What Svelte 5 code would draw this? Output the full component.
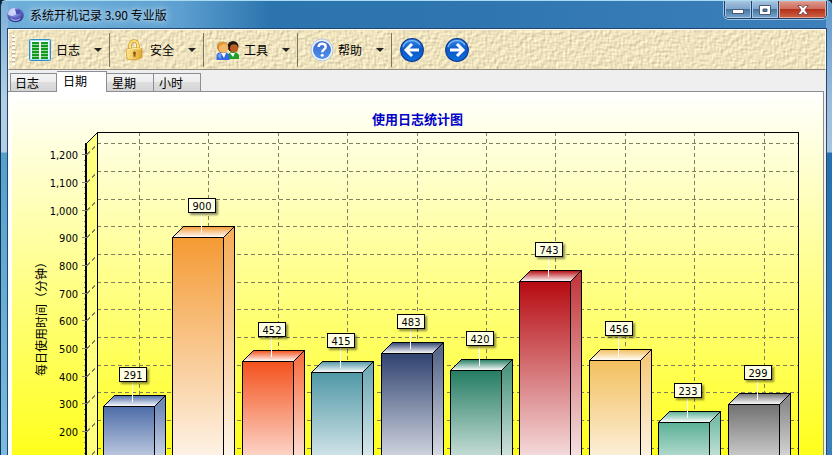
<script lang="ts">
	type IconType = 'log' | 'lock' | 'users' | 'help';

	interface Bar {
		value: number;
		color: string;
	}

	const menus: { label: string; icon: IconType }[] = [
		{ label: '日志', icon: 'log' },
		{ label: '安全', icon: 'lock' },
		{ label: '工具', icon: 'users' },
		{ label: '帮助', icon: 'help' }
	];

	const tabs = ['日志', '日期', '星期', '小时'];
	let selectedTab = $state('日期');

	const bars: Bar[] = [
		{ value: 291, color: '#4c6ca8' },
		{ value: 900, color: '#f49a33' },
		{ value: 452, color: '#f4511c' },
		{ value: 415, color: '#4f97a6' },
		{ value: 483, color: '#2f426f' },
		{ value: 420, color: '#237c62' },
		{ value: 743, color: '#b50a10' },
		{ value: 456, color: '#f3bf5e' },
		{ value: 233, color: '#5ab096' },
		{ value: 299, color: '#707070' }
	];

	// chart geometry
	const height = 363;
	const base = 395;
	const unit = 0.277;
	const depth = 11;
	const barWidth = 51;
	const wallLeft = 85;
	const wallTop = 40;

	let width = $state(810);
	let wallRight = $derived(width - 25);
	let pitch = $derived((width - 117) / bars.length);

	const toY = (value: number) => Math.floor(base - value * unit);
	const ticks = Array.from({ length: 12 }, (_, i) => 1200 - i * 100);
	const labelTicks = ticks.filter((tick) => toY(tick) + 8 < height);
	const minorTicks = Array.from({ length: 62 }, (_, i) => i * 20).filter((v) => v % 100 !== 0);

	let columns = $derived(
		bars.map((bar, i) => ({ ...bar, x: Math.round(91 + pitch * i), y: toY(bar.value) }))
	);
</script>

{#snippet icon(type: IconType)}
	<svg class="icon" viewBox="0 0 24 24" aria-hidden="true">
		{#if type === 'log'}
			<rect x="1.5" y="1.5" width="21" height="21" rx="1" fill="#fff" stroke="#2b93c9" />
			<rect x="2.5" y="2.5" width="19" height="19" fill="none" stroke="#a8dcf2" />
			<path d="M4 4h7v17H4zM13 4h7v17h-7z" fill="#9bd8a0" />
			{#each [4, 7, 10, 13, 16, 19] as y}
				<path d="M4 {y}h7v2h-7zM13 {y}h7v2h-7z" fill="#119a20" />
			{/each}
		{:else if type === 'lock'}
			<path d="M8 11V7.5a4 4.5 0 0 1 8 0V11" fill="none" stroke="#c99a35" stroke-width="3.5" />
			<path d="M8 11V7.5a4 4.5 0 0 1 8 0V11" fill="none" stroke="#ffe27a" stroke-width="2" />
			<path
				d="M4 11.5q8-3 16-1v9q-7 4-15 1.5z"
				fill="url(#gold)"
				stroke="#d19a28"
				stroke-width=".8"
			/>
			<path d="M5 12q7-2.5 14-1" fill="none" stroke="#fff0b0" />
			<path
				d="M12.5 13.5a1.6 1.6 0 0 1 1 2.8v2.5h-2v-2.5a1.6 1.6 0 0 1 1-2.8z"
				fill="#8c5c12"
			/>
		{:else if type === 'users'}
			<path d="M12 21v-4q1-3 5-3t6 3v4z" fill="#1da12b" />
			<path d="M14 15l3 4 2-4z" fill="#fff" />
			<circle cx="17" cy="8.5" r="5.5" fill="#201812" />
			<circle cx="18" cy="10.3" r="4" fill="#bd5c21" />
			<path d="M.5 22v-5q1-3 6-3t7 3v5z" fill="#3469df" />
			<path d="M1.5 18q1-3 4-3l-1 6z" fill="#72a0ff" />
			<path d="M5 15l3 5 2-5z" fill="#fff" />
			<circle cx="6.5" cy="9" r="5.5" fill="#c87724" />
			<circle cx="7.5" cy="10" r="4.8" fill="#f4b967" />
			<path d="M2 8q1-5 6-4 3 1 3 3-3-2-5 0t-4 1z" fill="#e29a3c" />
		{:else}
			<circle cx="12" cy="12" r="11" fill="#edf3fb" stroke="#b9c6de" />
			<circle cx="12" cy="12" r="9" fill="url(#help)" />
			<path
				d="M8.5 9q.3-3.2 3.7-3.2 3.5 0 3.5 3 0 1.7-2 2.9-1.4.9-1.4 2.5"
				fill="none"
				stroke="#fff"
				stroke-width="2.4"
			/>
			<circle cx="12.2" cy="17.2" r="1.5" fill="#fff" />
		{/if}
	</svg>
{/snippet}

{#snippet arrow(d: string)}
	<svg class="icon" viewBox="0 0 24 24" aria-hidden="true">
		<circle cx="12" cy="12" r="11.3" fill="url(#blue)" stroke="#0c3d98" stroke-width="1.2" />
		<path d="M3 9a9.5 9.5 0 0 1 17-2" fill="none" stroke="#7cbcf5" stroke-width="1.3" />
		<path {d} fill="none" stroke="#fff" stroke-width="3" />
	</svg>
{/snippet}

<div class="window">
	<svg class="defs" width="0" height="0" aria-hidden="true">
		<defs>
			<linearGradient id="gold" x1="0" x2="1">
				<stop offset="0" stop-color="#ffe890" />
				<stop offset="1" stop-color="#e0a62c" />
			</linearGradient>
			<linearGradient id="blue" x1="0" y1="0" x2="0" y2="1">
				<stop offset="0" stop-color="#3688e6" />
				<stop offset="0.5" stop-color="#0a56c8" />
				<stop offset="1" stop-color="#1070dc" />
			</linearGradient>
			<linearGradient id="help" x1="0" y1="0" x2="0" y2="1">
				<stop offset="0" stop-color="#3c66cc" />
				<stop offset="1" stop-color="#4c92ec" />
			</linearGradient>
			<radialGradient id="orb" cx="0.4" cy="0.25" r="0.8">
				<stop offset="0" stop-color="#d8dcff" />
				<stop offset="0.5" stop-color="#6a70cc" />
				<stop offset="1" stop-color="#27277c" />
			</radialGradient>
		</defs>
	</svg>

	<header class="titlebar">
		<svg class="app-icon" viewBox="0 0 16 16" aria-hidden="true">
			<ellipse cx="8" cy="8.5" rx="7.8" ry="6.8" fill="url(#orb)" />
			<path d="M.8 8q.5-6 6.500-6.200L9 6q-1 3-5 3.500z" fill="#d3d8fc" opacity=".85" />
			<path d="M7.500 3l4.500.5 1 3.500-4 1z" fill="#4b50b4" />
			<path d="M3 11q5 4 10 0-1 3-5 3t-5-3z" fill="#9ba5f2" />
		</svg>
		<h1>系统开机记录 3.90 专业版</h1>
		<div class="controls">
			<button aria-label="最小化">
				<svg viewBox="0 0 12 12">
					<rect x=".5" y="5.5" width="11" height="4" fill="#fff" stroke="#4a5a74" />
				</svg>
			</button>
			<button aria-label="最大化">
				<svg viewBox="0 0 12 12">
					<path
						d="M.5 1.5h11v9h-11zM4 5v2.5h4V5z"
						fill="#fff"
						fill-rule="evenodd"
						stroke="#4a5a74"
					/>
				</svg>
			</button>
			<button class="close" aria-label="关闭">
				<svg viewBox="0 0 12 12">
					<path
						d="M.8 1.5h3.4L6 3.7l1.8-2.2h3.4L7.9 6l3.3 4.5H7.8L6 8.3l-1.8 2.2H.8L4.1 6z"
						fill="#fff"
						stroke="#6b3a44"
						stroke-width=".8"
					/>
				</svg>
			</button>
		</div>
	</header>

	<main>
		<nav class="toolbar">
			<svg class="texture" aria-hidden="true">
				<filter
					id="weave"
					x="0"
					y="0"
					width="100%"
					height="100%"
					color-interpolation-filters="sRGB"
				>
					<feTurbulence
						type="fractalNoise"
						baseFrequency="0.18 0.45"
						numOctaves="1"
						seed="3"
						result="h"
					/>
					<feTurbulence
						type="fractalNoise"
						baseFrequency="0.45 0.18"
						numOctaves="1"
						seed="8"
						result="v"
					/>
					<feComposite in="h" in2="v" operator="arithmetic" k2="0.5" k3="0.5" />
					<feDiffuseLighting surfaceScale="0.7" diffuseConstant="1.2" lighting-color="#f6eac4">
						<feDistantLight azimuth="225" elevation="54" />
					</feDiffuseLighting>
				</filter>
				<rect width="100%" height="100%" filter="url(#weave)" />
			</svg>
			<span class="grip"></span>
			{#each menus as menu}
				<div class="group">
					<button class="tool">
						{@render icon(menu.icon)}
						<span>{menu.label}</span>
					</button>
					<button class="drop" aria-label="{menu.label}菜单" aria-haspopup="menu">
						<svg viewBox="0 0 8 4"><path d="M0 0h8L4 4z" fill="#222" /></svg>
					</button>
				</div>
			{/each}
			<div class="history">
				<button aria-label="后退">{@render arrow('M19 12H7M12 6l-6 6 6 6')}</button>
				<button aria-label="前进">{@render arrow('M5 12h12M12 6l6 6-6 6')}</button>
			</div>
		</nav>

		<div class="tabs" role="tablist">
			{#each tabs as tab}
				<button
					role="tab"
					aria-selected={selectedTab === tab}
					class:active={selectedTab === tab}
					onclick={() => (selectedTab = tab)}
				>
					{tab}
				</button>
			{/each}
		</div>

		<section class="panel">
			<div class="chart" bind:clientWidth={width}>
				<svg {width} {height} role="img" aria-label="使用日志统计图">
					<defs>
						{#each columns as bar, i}
							<linearGradient
								id="front{i}"
								gradientUnits="userSpaceOnUse"
								x1="0"
								x2="0"
								y1={bar.y}
								y2={base}
							>
								<stop offset="0" stop-color={bar.color} />
								<stop offset="1" stop-color="#fff" />
							</linearGradient>
							<linearGradient id="top{i}" x1="0" x2="0" y1="0" y2="1">
								<stop offset="0" stop-color={bar.color} />
								<stop offset="1" stop-color="#fff" />
							</linearGradient>
						{/each}
					</defs>

					<text class="title" x={width / 2} y="32">使用日志统计图</text>

					<g class="lines">
						<path
							d="M74.5 {wallTop + depth}.5L{wallLeft}.5 {wallTop}.5V{height}H74.5z"
							fill="#ffff80"
							stroke="none"
						/>
						<g class="grid">
							{#each ticks as tick}
								<path d="M{wallLeft} {toY(tick) - depth + 0.5}H{wallRight}" />
								<path d="M75 {toY(tick) + 0.5}l{depth} -{depth}" />
							{/each}
							{#each columns as bar}
								<path d="M{bar.x + 36.5} {wallTop}V{height}" />
							{/each}
						</g>
						<path d="M74.5 {wallTop + depth}.5L{wallLeft}.5 {wallTop}.5" />
						<path
							d="M{wallLeft}.5 {height + 1}V{wallTop}.5H{wallRight + 0.5}V{height + 1}"
						/>
						<path d="M74 {wallTop + depth}V{height}" stroke-width="2" />
						{#each ticks as tick}
							<path class="tick" d="M70 {toY(tick) + 0.5}h6" />
						{/each}
						{#each minorTicks as tick}
							<path class="tick" d="M72 {toY(tick) + 0.5}h1" />
						{/each}

						{#each columns as bar, i}
							<path
								d="M{bar.x + 0.5} {bar.y + 0.5}h{barWidth}V{height + 2}h-{barWidth}z"
								fill="url(#front{i})"
							/>
							<path
								d="M{bar.x + barWidth + 0.5} {bar.y + 0.5}l{depth} -{depth}V{height + 2}h-{depth}z"
								fill="url(#front{i})"
							/>
							<path
								class="shade"
								d="M{bar.x + barWidth + 1} {bar.y + 0.5}l{depth - 1} -{depth - 1}V{height +
									2}h-{depth - 1}z"
							/>
							<path
								d="M{bar.x + 0.5} {bar.y + 0.5}l{depth} -{depth}h{barWidth}l-{depth} {depth}z"
								fill="url(#top{i})"
							/>
						{/each}
					</g>

					{#each labelTicks as tick}
						<text class="value" x="66" y={toY(tick) + 5} text-anchor="end">
							{tick.toLocaleString('en-US')}
						</text>
					{/each}
					<text class="axis" transform="translate(34 224) rotate(-90)">每日使用时间（分钟）</text>

					{#each columns as bar}
						<path d="M{bar.x + 29.5} {bar.y - 25}v21" stroke="#fff" />
						<rect class="box" x={bar.x + 16.5} y={bar.y - 38.5} width="27" height="14" />
						<text class="value" x={bar.x + 30} y={bar.y - 27} text-anchor="middle">
							{bar.value}
						</text>
					{/each}
				</svg>
			</div>
		</section>
	</main>
</div>

<style>
	:global(body) {
		margin: 0;
		background: #0b2038;
	}

	.window {
		display: flex;
		flex-direction: column;
		box-sizing: border-box;
		min-height: 100vh;
		padding: 0 5px 0 6px;
		border-left: 1px solid #12344f;
		border-top: 1px solid #a9dcf0;
		border-radius: 6px 6px 0 0;
		background:
			linear-gradient(#7db0d8, #b4cfe4 100px, #b4cfe4 151px, #54a0cc 152px, #7bbbe0) left / 7px 100%
				no-repeat,
			linear-gradient(#5f99cb, #9cbcdc 100px, #a8c6e0 151px, #2670b0 152px, #3a80bc) right / 6px 100%
				no-repeat,
			linear-gradient(90deg, #6fb0da, #5c9fd0 180px, #2b74ae 270px, #2f76b0 480px, #3d80bb 100%);
		font-family: 'Noto Sans CJK SC', sans-serif;
		font-size: 12px;
		line-height: 16px;
		color: #000;
		overflow: hidden;
	}

	.defs {
		position: absolute;
	}

	button {
		padding: 0;
		border: 0;
		background: none;
		font: inherit;
		color: inherit;
	}

	svg {
		display: block;
	}

	.titlebar {
		display: flex;
		align-items: center;
		gap: 6px;
		height: 27px;
	}

	.app-icon {
		width: 17px;
		height: 17px;
	}

	h1 {
		flex: 1;
		margin: 0;
		font-size: 12px;
		font-weight: 400;
		text-shadow:
			0 0 4px #b4d6ee,
			0 0 8px #b4d6ee,
			0 0 12px #b4d6ee;
	}

	.controls {
		display: flex;
		align-self: flex-start;
		box-sizing: border-box;
		height: 18px;
		border: 1px solid #1f4068;
		border-top: 0;
		border-radius: 0 0 5px 5px;
		box-shadow: 0 0 0 1px #9cc4e4;
		overflow: hidden;
	}

	.controls button {
		display: flex;
		align-items: center;
		justify-content: center;
		width: 27px;
		border-right: 1px solid #1f4068;
		background: linear-gradient(#a5c3df, #7ba4cb 50%, #47759f 50%, #78a8d0);
		box-shadow: inset 0 0 0 1px #a9c8e4;
	}

	.controls .close {
		width: 47px;
		border-right: 0;
		background: linear-gradient(#dd9a8c, #cd6a58 50%, #b3301c 50%, #cf6545);
		box-shadow: inset 0 0 0 1px #e4a79b;
	}

	.controls svg {
		width: 12px;
		height: 12px;
	}

	main {
		display: flex;
		flex: 1;
		flex-direction: column;
		border: 1px solid #24466c;
		border-bottom: 0;
		background: #efefef;
	}

	.toolbar {
		position: relative;
		display: flex;
		align-items: center;
		height: 39px;
		border: 1px solid #fff;
		border-bottom-color: #8c8c84;
		background: #e9dfb8;
	}

	.texture {
		position: absolute;
		inset: 0;
		width: 100%;
		height: 100%;
	}

	.grip {
		position: relative;
		width: 3px;
		height: 30px;
		margin: 0 1px 0 3px;
		background: repeating-linear-gradient(#fff 0 2px, #c0b48c 2px 3px, transparent 3px 4px);
	}

	.group {
		position: relative;
		display: flex;
		align-items: center;
		height: 34px;
		padding-left: 12px;
		border-right: 1px solid #7c7660;
	}

	.tool {
		display: flex;
		align-items: center;
		gap: 4px;
	}

	.icon {
		width: 24px;
		height: 24px;
	}

	.drop {
		padding: 8px 7px 8px 14px;
	}

	.drop svg {
		width: 8px;
		height: 4px;
	}

	.history {
		position: relative;
		display: flex;
		gap: 21px;
		padding-left: 8px;
	}

	.tabs {
		display: flex;
		align-items: flex-end;
		height: 21px;
		padding-left: 2px;
	}

	.tabs button {
		box-sizing: border-box;
		width: 47px;
		height: 18px;
		padding-left: 4px;
		border: 1px solid #8c8e96;
		border-bottom: 0;
		background: linear-gradient(#f4f4f4, #ececec 50%, #dedede 50%, #d4d4d4);
		text-align: left;
	}

	.tabs button + button {
		padding-left: 5px;
		border-left: 0;
	}

	.tabs button.active {
		width: 50px;
		height: 21px;
		margin-bottom: -1px;
		padding: 0 0 2px 6px;
		background: #fff;
	}

	.panel {
		flex: 1;
		margin-right: 2px;
		padding-left: 4px;
		border: 1px solid #8c8e96;
		border-width: 1px 1px 0 0;
		background: #fff;
	}

	.tabs .active {
		position: relative;
	}

	.chart {
		background: linear-gradient(#fff, #ffff1c);
		overflow: hidden;
	}

	.lines {
		stroke: #000;
		fill: none;
		shape-rendering: crispEdges;
	}

	.grid {
		stroke: #808060;
		stroke-dasharray: 4 3;
	}

	.tick {
		stroke: #808080;
	}

	.shade {
		fill: #fff;
		fill-opacity: 0.2;
		stroke: none;
	}

	.title {
		font-size: 13px;
		font-weight: 700;
		text-anchor: middle;
		fill: #0000c8;
	}

	.axis {
		text-anchor: middle;
	}

	.value {
		font-family: 'DejaVu Sans Condensed', 'DejaVu Sans', sans-serif;
		font-size: 11px;
	}

	.box {
		fill: #ffffe6;
		stroke: #000;
		filter: drop-shadow(2px 2px 1px rgb(0 0 0 / 0.45));
	}
</style>
